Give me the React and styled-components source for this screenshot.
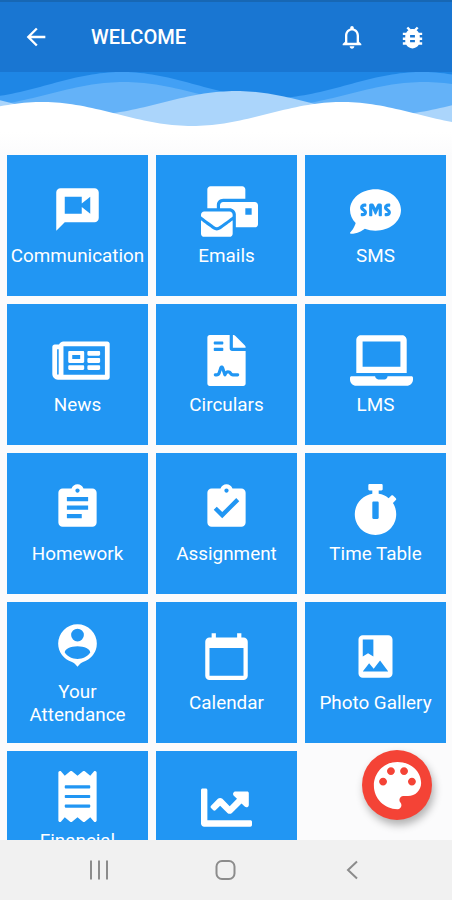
import React from 'react'
import styled, { createGlobalStyle } from 'styled-components'
import {
  MdArrowBack,
  MdNotificationsNone,
  MdBugReport,
  MdAssignment,
  MdAssignmentTurnedIn,
  MdCalendarToday
} from 'react-icons/md'
import {
  FaMailBulk,
  FaSms,
  FaRegNewspaper,
  FaFileContract,
  FaLaptop,
  FaStopwatch,
  FaReceipt,
  FaChartLine
} from 'react-icons/fa'

const GlobalStyle = createGlobalStyle`
  * {
    box-sizing: border-box;
  }
  body {
    margin: 0;
    font-family: Roboto, 'Liberation Sans', sans-serif;
  }
`

const Screen = styled.div`
  position: relative;
  display: flex;
  flex-direction: column;
  width: 452px;
  height: 900px;
  overflow: hidden;
  background: #fbfbfc;
`

const Header = styled.header`
  display: flex;
  align-items: center;
  flex: none;
  height: 72px;
  padding: 0 25px 0 22px;
  border-top: 2px solid #1767b4;
  background: #1976d2;
  color: #fff;
`

const Title = styled.h1`
  flex: 1;
  margin: 0 0 0 41px;
  font-size: 20.1px;
  font-weight: 500;
  line-height: 24px;
`

const HeaderButton = styled.button`
  display: flex;
  margin: 0 0 0 ${props => props.$gap || 0}px;
  padding: 0;
  border: 0;
  background: none;
  color: inherit;
  font-size: ${props => props.$size || 28}px;
`

const Waves = styled.svg`
  display: block;
  flex: none;
  width: 452px;
  height: 60px;
  background: #1e86e5;
`

const Content = styled.main`
  flex: 1;
  min-height: 0;
  overflow: hidden;
  padding: 23px 6px 0 7px;
  background: linear-gradient(#fff, #fbfbfc 24px);
`

const Grid = styled.div`
  display: grid;
  grid-template-columns: repeat(3, 141px);
  grid-auto-rows: 141px;
  gap: 8px;
`

const StyledTile = styled.div`
  display: flex;
  flex-direction: column;
  align-items: center;
  justify-content: center;
  padding-top: 3px;
  background: #2196f3;
  color: #fff;
`

// the box stays square, wider glyphs run out on its right side
const TileIcon = styled.div`
  display: flex;
  width: 51px;
  height: 51px;

  svg {
    flex: none;
    width: ${props => props.$width || 51}px;
    height: 51px;
    margin-top: ${props => props.$material ? -2.4 : 0}px;
  }
`

const TileLabel = styled.p`
  min-height: ${props => (props.$lines || 1) * 22.4}px;
  margin: 8px 0 0;
  font-size: 18.85px;
  line-height: 22.4px;
  text-align: center;
  white-space: pre-line;
`

const PaletteButton = styled.button`
  position: absolute;
  right: 20px;
  bottom: 80px;
  display: flex;
  align-items: center;
  justify-content: center;
  width: 70px;
  height: 70px;
  padding: 0;
  border: 0;
  border-radius: 50%;
  background: #f44336;
  color: #fff;
  box-shadow: 2px 5px 9px rgba(0, 0, 0, 0.3);

  svg {
    flex: none;
    width: 63px;
    height: 63px;
  }
`

const NavBar = styled.nav`
  display: flex;
  align-items: center;
  justify-content: space-between;
  flex: none;
  height: 60px;
  padding: 0 88px 0 87px;
  background: #f1f1f1;

  svg {
    width: 24px;
    height: 24px;
    fill: none;
    stroke: #8c8c8c;
    stroke-width: 2;
  }
`

const VideoChatIcon = () => (
  <svg viewBox='0 0 24 24' fill='currentColor'>
    <path d='M20 2H4c-1.1 0-2 .9-2 2v18l4-4h14c1.1 0 2-.9 2-2V4c0-1.1-.9-2-2-2zm-2 12l-4-3.2V14H6V6h8v3.2L18 6v8z' />
  </svg>
)

const PersonPinIcon = () => (
  <svg viewBox='0 0 24 24' fill='currentColor' fillRule='evenodd'>
    <path d='M12 2a9.1 9.1 0 0 0-9.1 9.1c0 4.1 2.7 7.5 6.5 8.7.9.3 1.8 1.2 2.6 2.2.8-1 1.7-1.9 2.6-2.2a9.1 9.1 0 0 0 6.5-8.7A9.1 9.1 0 0 0 12 2zm0 2.1a3 3 0 1 1 0 6 3 3 0 0 1 0-6zm0 8.2c3.2 0 6 1.3 6 3-1.3 1.9-3.5 3-6 3s-4.7-1.1-6-3c0-1.7 2.8-3 6-3z' />
  </svg>
)

const PhotoAlbumIcon = () => (
  <svg viewBox='0 0 24 24' fill='currentColor'>
    <path d='M18 2H6c-1.1 0-2 .9-2 2v16c0 1.1.9 2 2 2h12c1.1 0 2-.9 2-2V4c0-1.1-.9-2-2-2zM6 4h5v8l-2.5-1.5L6 12V4zm0 15l3-3.86 2.14 2.58 3-3.86L18 19H6z' />
  </svg>
)

const PaletteIcon = () => (
  <svg viewBox='0 0 24 24' fill='currentColor'>
    <path d='M12 3c-4.97 0-9 4.03-9 9s4.03 9 9 9c.83 0 1.5-.67 1.5-1.5 0-.39-.15-.74-.39-1.01-.23-.26-.38-.61-.38-.99 0-.83.67-1.5 1.5-1.5H16c2.76 0 5-2.24 5-5 0-4.42-4.03-8-9-8zm-5.5 9c-.83 0-1.5-.67-1.5-1.5S5.67 9 6.5 9 8 9.67 8 10.5 7.33 12 6.5 12zm3-4C8.67 8 8 7.33 8 6.5S8.67 5 9.5 5s1.5.67 1.5 1.5S10.33 8 9.5 8zm5 0c-.83 0-1.5-.67-1.5-1.5S13.67 5 14.5 5s1.5.67 1.5 1.5S15.33 8 14.5 8zm3 4c-.83 0-1.5-.67-1.5-1.5S16.67 9 17.5 9s1.5.67 1.5 1.5-.67 1.5-1.5 1.5z' />
  </svg>
)

const waves = [
  { crest: 122, mid: 85, amp: 13, fill: '#42a0f5' },
  { crest: 124, mid: 94, amp: 12, fill: '#64b2f8' },
  { crest: 236, mid: 103, amp: 12, fill: '#abd5fb' },
  { crest: 42, mid: 114, amp: 12, fill: '#fff' }
]

function wavePath ({ crest, mid, amp }) {
  const points = []
  for (let x = 0; x <= 452; x += 4) {
    const y = mid - 72 - amp * Math.cos(((x - crest) / 300) * 2 * Math.PI)
    points.push(`${x} ${y.toFixed(2)}`)
  }
  return `M${points.join('L')}V60H0z`
}

const tiles = [
  { label: 'Communication', icon: VideoChatIcon, material: true },
  { label: 'Emails', icon: FaMailBulk, width: 57 },
  { label: 'SMS', icon: FaSms },
  { label: 'News', icon: FaRegNewspaper, width: 58 },
  { label: 'Circulars', icon: FaFileContract },
  { label: 'LMS', icon: FaLaptop, width: 63 },
  { label: 'Homework', icon: MdAssignment, material: true },
  { label: 'Assignment', icon: MdAssignmentTurnedIn, material: true },
  { label: 'Time Table', icon: FaStopwatch },
  { label: 'Your\nAttendance', icon: PersonPinIcon, material: true },
  { label: 'Calendar', icon: MdCalendarToday, material: true },
  { label: 'Photo Gallery', icon: PhotoAlbumIcon, material: true },
  { label: 'Financial', icon: FaReceipt, lines: 2 },
  { label: '', icon: FaChartLine }
]

const Tile = ({ label, icon: Icon, width, lines, material }) => (
  <StyledTile>
    <TileIcon $width={width} $material={material}><Icon /></TileIcon>
    <TileLabel $lines={lines}>{label}</TileLabel>
  </StyledTile>
)

const App = () => {
  return (
    <Screen>
      <GlobalStyle />
      <Header>
        <HeaderButton aria-label='Back'><MdArrowBack /></HeaderButton>
        <Title>WELCOME</Title>
        <HeaderButton aria-label='Notifications' $size={28}><MdNotificationsNone /></HeaderButton>
        <HeaderButton aria-label='Report a bug' $size={29} $gap={32}><MdBugReport /></HeaderButton>
      </Header>
      <Waves viewBox='0 0 452 60'>
        {waves.map(wave => <path key={wave.fill} d={wavePath(wave)} fill={wave.fill} />)}
      </Waves>
      <Content>
        <Grid>
          {tiles.map(tile => <Tile key={tile.label} {...tile} />)}
        </Grid>
      </Content>
      <PaletteButton aria-label='Theme'><PaletteIcon /></PaletteButton>
      <NavBar>
        <svg viewBox='0 0 24 24'><path d='M4 2.5v19M12 2.5v19M20 2.5v19' /></svg>
        <svg viewBox='0 0 24 24'><rect x='2.5' y='3' width='18' height='18' rx='5.5' /></svg>
        <svg viewBox='0 0 24 24'><path d='M17 3.5L8 12l9 8.5' /></svg>
      </NavBar>
    </Screen>
  )
}

export default App
